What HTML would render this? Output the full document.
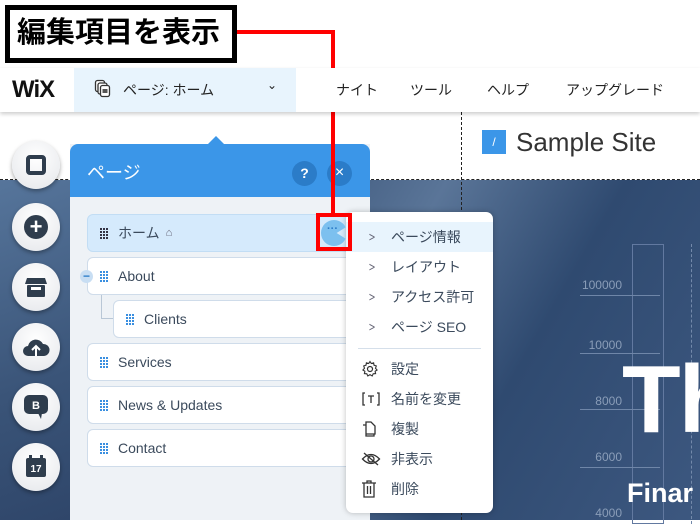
<!DOCTYPE html>
<html><head><meta charset="utf-8"><style>
*{margin:0;padding:0;box-sizing:border-box}
body{width:700px;height:520px;overflow:hidden;position:relative;background:#fff;font-family:"Liberation Sans","Noto Sans CJK JP",sans-serif}
.a{position:absolute}
.bg{left:0;top:180px;width:700px;height:340px;background:linear-gradient(120deg,#4d6a90 0%,#3a5478 30%,#5a7598 50%,#2f4a70 70%,#3d5880 100%)}
.circ{width:48px;height:48px;border-radius:50%;background:radial-gradient(circle at 50% 35%,#fff,#e4e6ea);box-shadow:0 2px 4px rgba(0,0,0,.35);left:12px;display:flex;align-items:center;justify-content:center}
.row{left:87px;width:290px;height:38px;background:#fff;border:1px solid #cfdcea;border-radius:6px;font-size:14px;color:#3b4a5c;display:flex;align-items:center;padding-left:30px}
.grip{position:absolute;left:12px;top:13px}
.mi{left:346px;width:147px;height:30px;font-size:14px;color:#3b4a5c;display:flex;align-items:center;padding-left:45px}
.mi .c{position:absolute;left:21px;font-size:12px;color:#667;font-family:"DejaVu Sans",sans-serif;transform:scaleX(.7)}
.mi svg{position:absolute;left:15px}
.num{color:#8a9db8;font-size:12px;text-align:right;width:60px;left:562px}
.hl{height:1px;background:#6f86a8;left:580px;width:80px}
</style></head><body>
<svg width="0" height="0" style="position:absolute"><defs>
<g id="gb"><g fill="#3a8fe0"><rect x="0" y="0" width="2" height="2"/><rect x="3" y="0" width="2" height="2"/><rect x="6" y="0" width="2" height="2"/><rect x="0" y="3" width="2" height="2"/><rect x="3" y="3" width="2" height="2"/><rect x="6" y="3" width="2" height="2"/><rect x="0" y="6" width="2" height="2"/><rect x="3" y="6" width="2" height="2"/><rect x="6" y="6" width="2" height="2"/><rect x="0" y="9" width="2" height="2"/><rect x="3" y="9" width="2" height="2"/><rect x="6" y="9" width="2" height="2"/></g></g>
</defs></svg>
<div class="a" style="left:0;top:68px;width:700px;height:44px;background:#fff;box-shadow:0 2px 4px rgba(0,0,0,.2);z-index:2">
 <div class="a" style="left:12px;top:8px;font-size:24px;font-weight:bold;color:#111;letter-spacing:-1px">WiX</div>
 <div class="a" style="left:74px;top:0;width:222px;height:44px;background:#e8f4fd"></div>
 <svg class="a" style="left:94px;top:11px" width="18" height="20" viewBox="0 0 18 20"><rect x="1.5" y="1.5" width="9" height="11" rx="2" fill="#fff" stroke="#333" stroke-width="1.3"/><rect x="4" y="4" width="9" height="11" rx="2" fill="#fff" stroke="#333" stroke-width="1.3"/><rect x="6.5" y="6.5" width="9" height="11" rx="2" fill="#fff" stroke="#333" stroke-width="1.3"/><rect x="8.5" y="10" width="5" height="4" fill="#555"/></svg>
 <div class="a" style="left:123px;top:12px;font-size:14px;color:#222">ページ: ホーム</div>
 <div class="a" style="left:267px;top:10px;font-size:12px;color:#222">⌄</div>
 <div class="a" style="left:336px;top:12px;font-size:14px;color:#222">ナイト</div>
 <div class="a" style="left:410px;top:12px;font-size:14px;color:#222">ツール</div>
 <div class="a" style="left:487px;top:12px;font-size:14px;color:#222">ヘルプ</div>
 <div class="a" style="left:566px;top:12px;font-size:14px;color:#222">アップグレード</div>
</div>
<div class="a bg"></div>
<div class="a" style="left:0;top:179px;width:700px;border-top:1px dashed #222"></div>
<div class="a" style="left:461px;top:112px;height:408px;border-left:1px dashed #222"></div>
<div class="a" style="left:482px;top:130px;width:24px;height:24px;background:#3b96e8;color:#fff;font-size:12px;text-align:center;line-height:24px">/</div>
<div class="a" style="left:516px;top:127px;font-size:26px;color:#333">Sample Site</div>
<div class="a" style="left:632px;top:244px;width:32px;height:280px;border:1px solid #6279a0"></div>
<div class="a" style="left:691px;top:244px;height:280px;border-left:1px dashed #7389aa"></div>
<div class="a num" style="top:278px">100000</div><div class="a hl" style="top:295px"></div>
<div class="a num" style="top:338px">10000</div><div class="a hl" style="top:353px"></div>
<div class="a num" style="top:394px">8000</div><div class="a hl" style="top:409px"></div>
<div class="a num" style="top:450px">6000</div><div class="a hl" style="top:467px"></div>
<div class="a num" style="top:506px">4000</div>
<div class="a" style="left:622px;top:350px;font-size:96px;color:#fff;line-height:100px;font-weight:bold;letter-spacing:-2px">Th</div>
<div class="a" style="left:627px;top:478px;font-size:27px;color:#fff;font-weight:bold">Finar</div>
<div class="a" style="left:0;top:180px;width:70px;height:340px;background:linear-gradient(160deg,#56759b,#3a5478 60%,#2f466a)"></div>
<div class="a circ" style="top:141px"><div style="width:20px;height:20px;border:4px solid #2f3d4d;border-radius:4px"></div></div>
<div class="a circ" style="top:203px"><div style="width:24px;height:24px;border-radius:50%;background:#2f3d4d;color:#fff;font-weight:bold;font-size:22px;line-height:23px;text-align:center">+</div></div>
<div class="a circ" style="top:263px"><svg width="24" height="22" viewBox="0 0 24 22"><path d="M3 2h18l2 6H1z" fill="#2f3d4d"/><rect x="3" y="9" width="18" height="12" rx="1" fill="#2f3d4d"/><rect x="7" y="11" width="10" height="3" fill="#fff"/></svg></div>
<div class="a circ" style="top:323px"><svg width="28" height="22" viewBox="0 0 28 22"><path d="M6 20a5 5 0 0 1 0-10a8 8 0 0 1 15-2a6 6 0 0 1 1 12z" fill="#2f3d4d"/><path d="M14 20V10M10 14l4-4 4 4" stroke="#fff" stroke-width="2" fill="none"/></svg></div>
<div class="a circ" style="top:383px"><svg width="26" height="26" viewBox="0 0 26 26"><rect x="1" y="1" width="24" height="19" rx="5" fill="#2f3d4d"/><path d="M15 19l3 6 1-6z" fill="#2f3d4d"/><text x="13" y="15" fill="#fff" font-size="11" font-weight="bold" text-anchor="middle" font-family="Liberation Sans">B</text></svg></div>
<div class="a circ" style="top:443px"><svg width="24" height="26" viewBox="0 0 24 26"><rect x="2" y="4" width="20" height="19" rx="2" fill="#2f3d4d"/><rect x="5" y="1" width="3" height="5" fill="#2f3d4d"/><rect x="16" y="1" width="3" height="5" fill="#2f3d4d"/><text x="12" y="18" fill="#fff" font-size="10" font-weight="bold" text-anchor="middle" font-family="Liberation Sans">17</text></svg></div>
<div class="a" style="left:70px;top:144px;width:300px;height:376px;background:#eef2f6"></div>
<div class="a" style="left:70px;top:144px;width:300px;height:53px;background:#3b96e8;border-radius:8px 8px 0 0"></div>
<div class="a" style="left:208px;top:136px;width:0;height:0;border-left:8px solid transparent;border-right:8px solid transparent;border-bottom:8px solid #3b96e8"></div>
<div class="a" style="left:87px;top:159px;font-size:18px;color:#fff">ページ</div>
<div class="a" style="left:292px;top:161px;width:25px;height:25px;border-radius:50%;background:#2b7cc8;color:#fff;font-size:14px;font-weight:bold;text-align:center;line-height:25px">?</div>
<div class="a" style="left:327px;top:161px;width:25px;height:25px;border-radius:50%;background:#2b7cc8;color:#fff;font-size:16px;text-align:center;line-height:24px">×</div>
<div class="a row" style="top:214px;background:#d5eafc;border-color:#c2ddf4">ホーム <span style="font-size:11px;color:#667;margin-left:6px">⌂</span><svg class="grip" width="8" height="11"><use href="#gb" style="fill:#334"/><g fill="#334"><rect x="0" y="0" width="2" height="2"/><rect x="3" y="0" width="2" height="2"/><rect x="6" y="0" width="2" height="2"/><rect x="0" y="3" width="2" height="2"/><rect x="3" y="3" width="2" height="2"/><rect x="6" y="3" width="2" height="2"/><rect x="0" y="6" width="2" height="2"/><rect x="3" y="6" width="2" height="2"/><rect x="6" y="6" width="2" height="2"/><rect x="0" y="9" width="2" height="2"/><rect x="3" y="9" width="2" height="2"/><rect x="6" y="9" width="2" height="2"/></g></svg></div>
<div class="a row" style="top:257px">About<svg class="grip" width="8" height="11"><use href="#gb"/></svg></div>
<div class="a" style="left:80px;top:270px;width:13px;height:13px;border-radius:50%;background:#c8def3;color:#2b7cc8;font-size:12px;font-weight:bold;text-align:center;line-height:12px">−</div>
<div class="a" style="left:101px;top:295px;width:12px;height:24px;border-left:1px solid #b9c7d6;border-bottom:1px solid #b9c7d6"></div>
<div class="a row" style="top:300px;left:113px">Clients<svg class="grip" width="8" height="11"><use href="#gb"/></svg></div>
<div class="a row" style="top:343px">Services<svg class="grip" width="8" height="11"><use href="#gb"/></svg></div>
<div class="a row" style="top:386px">News &amp; Updates<svg class="grip" width="8" height="11"><use href="#gb"/></svg></div>
<div class="a row" style="top:429px">Contact<svg class="grip" width="8" height="11"><use href="#gb"/></svg></div>
<div class="a" style="left:346px;top:212px;width:147px;height:301px;background:#fff;border-radius:7px;box-shadow:0 0 6px rgba(0,0,0,.25)"></div>
<div class="a" style="left:346px;top:222px;width:147px;height:30px;background:#e8f4fd"></div>
<div class="a mi" style="top:222px"><span class="c">&gt;</span>ページ情報</div>
<div class="a mi" style="top:252px"><span class="c">&gt;</span>レイアウト</div>
<div class="a mi" style="top:282px"><span class="c">&gt;</span>アクセス許可</div>
<div class="a mi" style="top:312px"><span class="c">&gt;</span>ページ SEO</div>
<div class="a" style="left:358px;top:348px;width:123px;height:1px;background:#d5dfea"></div>
<div class="a mi" style="top:354px"><svg width="18" height="18" viewBox="0 0 18 18"><circle cx="9" cy="9" r="2.5" fill="none" stroke="#333" stroke-width="1.2"/><path d="M9 1.5l1.3 2 2.3-.7.4 2.4 2.3.8-.8 2.2 1.6 1.8-2 1.3.5 2.3-2.4.2-1 2.2L9 14.6l-2.2 1.4-1-2.2-2.4-.2.5-2.3-2-1.3L3.5 8.2 2.7 6l2.3-.8.4-2.4 2.3.7z" fill="none" stroke="#333" stroke-width="1.1"/></svg>設定</div>
<div class="a mi" style="top:384px"><svg width="20" height="16" viewBox="0 0 20 16"><path d="M4 2H2v12h2M16 2h2v12h-2M7 5h6M10 5v7" stroke="#333" stroke-width="1.3" fill="none"/></svg>名前を変更</div>
<div class="a mi" style="top:414px"><svg width="16" height="18" viewBox="0 0 16 18"><path d="M5 4V2h5l4 4v8H5z M2 5h3v11h8v-2" stroke="#333" stroke-width="1.3" fill="none"/></svg>複製</div>
<div class="a mi" style="top:444px"><svg width="20" height="16" viewBox="0 0 20 16"><path d="M1.5 8Q10 -1 18.5 8Q10 17 1.5 8z" stroke="#333" stroke-width="1.3" fill="none"/><circle cx="10" cy="8" r="3" stroke="#333" stroke-width="1.3" fill="none"/><path d="M3 2l14 12" stroke="#333" stroke-width="1.3"/></svg>非表示</div>
<div class="a mi" style="top:474px"><svg width="16" height="18" viewBox="0 0 16 18"><path d="M1 3h14M6 3V1h4v2M3 3v14h10V3M6.5 6v8M9.5 6v8" stroke="#333" stroke-width="1.3" fill="none"/></svg>削除</div>
<div class="a" style="left:321px;top:220px;width:26px;height:26px;border-radius:50%;background:#7cc0ef;clip-path:polygon(0 0,100% 0,100% 25%,60% 50%,100% 75%,100% 100%,0 100%)"></div>
<div class="a" style="left:327px;top:223px;font-size:11px;color:#2b7cc8;font-weight:bold">···</div>
<div class="a" style="left:316px;top:213px;width:36px;height:38px;border:4px solid #f00"></div>
<div class="a" style="left:331px;top:30px;width:4px;height:184px;background:#f00"></div>
<div class="a" style="left:237px;top:30px;width:98px;height:4px;background:#f00"></div>
<div class="a" style="left:5px;top:5px;width:232px;height:58px;border:5px solid #000;background:#fff;font-size:29px;font-weight:bold;color:#000;padding-left:7px;line-height:46px">編集項目を表示</div>
</body></html>
